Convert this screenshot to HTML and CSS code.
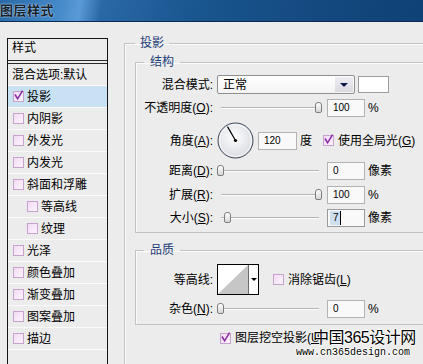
FILE: index.html
```html
<!DOCTYPE html>
<html lang="zh-CN">
<head>
    <meta charset="UTF-8">
    <title>图层样式</title>
    <link rel="stylesheet" href="styles.css">
</head>
<body>

    <div class="titlebar"><span class="title">图层样式</span></div>

    <div class="main">
        <!-- 左侧样式列表 -->
        <div class="styles-list">
            <div class="list-head">样式</div>
            <ul class="list">
                <li class="plain">混合选项:默认</li>
                <li class="active"><span class="cb"><svg width="11" height="11" viewBox="0 0 11 11"><path d="M2 4.5 L4.6 8.8 L9.6 0.6" fill="none" stroke="#8c2ea6" stroke-width="1.6"/></svg></span>投影</li>
                <li><span class="cb"></span>内阴影</li>
                <li><span class="cb"></span>外发光</li>
                <li><span class="cb"></span>内发光</li>
                <li><span class="cb"></span>斜面和浮雕</li>
                <li class="sub"><span class="cb"></span>等高线</li>
                <li class="sub"><span class="cb"></span>纹理</li>
                <li><span class="cb"></span>光泽</li>
                <li><span class="cb"></span>颜色叠加</li>
                <li><span class="cb"></span>渐变叠加</li>
                <li><span class="cb"></span>图案叠加</li>
                <li><span class="cb"></span>描边</li>
                <li class="plain"></li>
            </ul>
        </div>

        <!-- 右侧设置 -->
        <div class="settings">
            <fieldset class="group outer">
                <legend>投影</legend>

                <fieldset class="group inner">
                    <legend>结构</legend>

                    <div class="row row-blend">
                        <span class="lbl">混合模式:</span>
                        <div class="select"><span class="select-text">正常</span><span class="select-arrow"></span></div>
                        <div class="swatch"></div>
                    </div>

                    <div class="row row-opacity">
                        <span class="lbl">不透明度(<u>O</u>):</span>
                        <div class="slider"><span class="track"></span><span class="thumb" style="left: 98px"></span></div>
                        <div class="num">100</div>
                        <span class="unit">%</span>
                    </div>

                    <div class="row row-angle">
                        <span class="lbl">角度(<u>A</u>):</span>
                        <svg class="dial" width="37" height="37" viewBox="0 0 37 37">
                            <defs>
                                <radialGradient id="dialFill" cx="45%" cy="40%" r="60%">
                                    <stop offset="0" stop-color="#ffffff"/>
                                    <stop offset="1" stop-color="#dadce2"/>
                                </radialGradient>
                            </defs>
                            <circle cx="18.5" cy="18.5" r="17.5" fill="url(#dialFill)" stroke="#3b4658"/>
                            <circle cx="18.5" cy="18.5" r="16" fill="none" stroke="#ffffff" opacity="0.8"/>
                            <line x1="18.5" y1="18.5" x2="10.5" y2="4.6" stroke="#000" stroke-width="1.2"/>
                            <circle cx="18.5" cy="18.5" r="1.6" fill="#000"/>
                        </svg>
                        <div class="num num-angle">120</div>
                        <span class="unit">度</span>
                        <span class="cb cb-gap"><svg width="11" height="11" viewBox="0 0 11 11"><path d="M2 4.5 L4.6 8.8 L9.6 0.6" fill="none" stroke="#8c2ea6" stroke-width="1.6"/></svg></span>
                        <span class="cb-text">使用全局光(<u>G</u>)</span>
                    </div>

                    <div class="row row-distance">
                        <span class="lbl">距离(<u>D</u>):</span>
                        <div class="slider"><span class="track"></span><span class="thumb" style="left: 0px"></span></div>
                        <div class="num">0</div>
                        <span class="unit">像素</span>
                    </div>

                    <div class="row row-spread">
                        <span class="lbl">扩展(<u>R</u>):</span>
                        <div class="slider"><span class="track"></span><span class="thumb" style="left: 98px"></span></div>
                        <div class="num">100</div>
                        <span class="unit">%</span>
                    </div>

                    <div class="row row-size">
                        <span class="lbl">大小(<u>S</u>):</span>
                        <div class="slider"><span class="track"></span><span class="thumb" style="left: 7px"></span></div>
                        <div class="num num-active"><span class="sel">7</span></div>
                        <span class="unit">像素</span>
                    </div>
                </fieldset>

                <fieldset class="group quality">
                    <legend>品质</legend>

                    <div class="row row-contour">
                        <span class="lbl">等高线:</span>
                        <div class="contour">
                            <svg class="contour-pic" width="30" height="29" viewBox="0 0 30 29">
                                <polygon points="0,29 30,0 30,29" fill="#c6c6c6"/>
                            </svg>
                            <span class="contour-arrow"></span>
                        </div>
                        <span class="cb cb-aa"></span>
                        <span class="cb-text">消除锯齿(<u>L</u>)</span>
                    </div>

                    <div class="row row-noise">
                        <span class="lbl">杂色(<u>N</u>):</span>
                        <div class="slider"><span class="track"></span><span class="thumb" style="left: 0px"></span></div>
                        <div class="num">0</div>
                        <span class="unit">%</span>
                    </div>
                </fieldset>

                <div class="knockout">
                    <span class="cb"><svg width="11" height="11" viewBox="0 0 11 11"><path d="M2 4.5 L4.6 8.8 L9.6 0.6" fill="none" stroke="#8c2ea6" stroke-width="1.6"/></svg></span>
                    <span class="cb-text">图层挖空投影(<u>U</u>)</span>
                </div>
            </fieldset>
        </div>
    </div>

    <div class="watermark">
        <div class="wm-title">中国365设计网</div>
        <div class="wm-url">www.cn365design.com</div>
    </div>

</body>
</html>
```

FILE: styles.css
```css
body {
    margin: 0;
    width: 423px;
    height: 364px;
    overflow: hidden;
    position: relative;
    background-color: #ececec;
    font-family: "Liberation Sans", "Noto Sans CJK SC", sans-serif;
    font-size: 12px;
    line-height: 14px;
    color: #000;
}

/* 标题栏 */
.titlebar {
    height: 21px;
    border-bottom: 1px solid #0b2b52;
    background: linear-gradient(100deg, #2a6aa8 0%, #4489c8 14%, #5a9ad6 19%, #2a68a6 24%, #1a5690 45%, #13497f 75%, #0f4276 100%);
    display: flex;
    align-items: center;
}
.title {
    font-size: 13px;
    font-weight: bold;
    color: #16222e;
    letter-spacing: 0.5px;
    text-shadow: 0 0 2px #a9d0f2, 0 0 1px #cfe6fa;
}

.main {
    display: flex;
    align-items: flex-start;
    padding-top: 14px;
}

/* 左侧列表 */
.styles-list {
    margin: 2px 0 0 7px;
    width: 99px;
    height: 325px;
    border: 1px solid #141414;
    border-bottom: none;
    flex: none;
    overflow: hidden;
}
.list-head {
    height: 21px;
    line-height: 19px;
    padding-left: 4px;
    border-bottom: 1px solid #2a2a2a;
}
.list {
    list-style: none;
    margin: 2px 0 0 0;
    padding: 0;
    border-top: 1px solid #2a2a2a;
}
.list li {
    height: 22px;
    box-sizing: border-box;
    border-bottom: 1px solid #fafafa;
    padding-left: 5px;
    display: flex;
    align-items: center;
    white-space: nowrap;
}
.list li.plain {
    padding-left: 4px;
}
.list li.sub {
    padding-left: 19px;
}
.list li.active {
    background-color: #c9e2f3;
}
.list li .cb {
    margin-right: 3px;
}

/* 复选框 */
.cb {
    width: 11px;
    height: 11px;
    box-sizing: border-box;
    border: 1px solid #c8a2cf;
    background: linear-gradient(135deg, #f2dcf4, #fcf3fc);
    flex: none;
    display: inline-flex;
    overflow: visible;
}
.cb svg {
    margin: -2px 0 0 -1px;
    overflow: visible;
}
.cb-text {
    margin-left: 4px;
    white-space: nowrap;
}

/* 右侧设置 */
.settings {
    margin-left: 16px;
    width: 299px;
    flex: none;
}
.group {
    margin: 0;
    min-width: 0;
    border: 1px solid #c2c2c2;
    border-right: none;
    box-shadow: inset 1px 1px 0 #fbfbfb;
}
.group legend {
    padding: 0 5px;
    line-height: 14px;
    color: #1d3d78;
}
.outer {
    padding: 5px 0 19px 10px;
    border-bottom: none;
}
.inner {
    padding: 6px 0 5px 0;
}
.inner legend,
.quality legend {
    margin-left: 8px;
    padding: 0 6px;
}
.quality {
    margin-top: 10px;
    padding: 7px 0 6px 0;
}

.row {
    display: flex;
    align-items: center;
    white-space: nowrap;
}
.lbl {
    width: 77px;
    margin-right: 4px;
    text-align: right;
    flex: none;
}
.row-blend { height: 19px; margin-bottom: 5px; }
.row-opacity { height: 18px; margin-bottom: 5px; }
.row-angle { height: 37px; margin-bottom: 3px; }
.row-distance { height: 18px; margin-bottom: 6px; }
.row-spread { height: 18px; margin-bottom: 4px; }
.row-size { height: 19px; }
.row-contour { height: 31px; margin-bottom: 5px; }
.row-noise { height: 18px; }

/* 下拉框 */
.select {
    width: 138px;
    height: 19px;
    box-sizing: border-box;
    border: 1px solid #8f8f8f;
    border-radius: 2px;
    background: linear-gradient(#ffffff, #f4f4f4);
    display: flex;
    align-items: center;
    justify-content: space-between;
    padding: 1px 1px 1px 5px;
}
.select-arrow {
    width: 18px;
    height: 15px;
    background: linear-gradient(#eeeef2, #d9dae0);
    position: relative;
}
.select-arrow::after {
    content: "";
    position: absolute;
    left: 5px;
    top: 6px;
    border-left: 4px solid transparent;
    border-right: 4px solid transparent;
    border-top: 4px solid #101a48;
}
.swatch {
    width: 31px;
    height: 17px;
    margin-left: 3px;
    box-sizing: border-box;
    border: 1px solid #9c9c9c;
    background-color: #fff;
}

/* 滑块 */
.slider {
    width: 106px;
    height: 12px;
    position: relative;
    flex: none;
}
.track {
    position: absolute;
    left: 4px;
    right: 4px;
    top: 5px;
    height: 1px;
    background-color: #b4b4b4;
    border-bottom: 1px solid #fdfdfd;
}
.thumb {
    position: absolute;
    top: 0;
    width: 7px;
    height: 11px;
    box-sizing: border-box;
    border: 1px solid #7d7d7d;
    border-radius: 3px 3px 2px 2px;
    background: linear-gradient(#ffffff, #d6d6d6);
}

/* 数值框 */
.num {
    width: 38px;
    height: 18px;
    margin-left: 4px;
    box-sizing: border-box;
    border: 1px solid #b2b2b2;
    background-color: #f9f9f9;
    font-size: 10px;
    line-height: 16px;
    padding-left: 5px;
    flex: none;
}
.num-angle {
    width: 39px;
    margin-left: 4px;
}
.num-active {
    padding-left: 2px;
    border-color: #9a9a9a;
}
.sel {
    display: inline-block;
    height: 14px;
    line-height: 14px;
    margin-top: 1px;
    padding: 0 1px 0 3px;
    background-color: #cde0f2;
    border-right: 1px solid #000;
}
.unit {
    margin-left: 3px;
}
.dial {
    flex: none;
}
.cb-gap {
    margin-left: 11px;
}

/* 等高线 */
.contour {
    width: 42px;
    height: 31px;
    box-sizing: border-box;
    border: 1px solid #000;
    background-color: #fff;
    display: flex;
    flex: none;
}
.contour-pic {
    display: block;
    border-right: 1px solid #6a6a6a;
}
.contour-arrow {
    flex: 1;
    position: relative;
}
.contour-arrow::after {
    content: "";
    position: absolute;
    left: 2px;
    top: 13px;
    border-left: 3px solid transparent;
    border-right: 3px solid transparent;
    border-top: 3px solid #000;
}
.cb-aa {
    margin-left: 14px;
}

.knockout {
    display: flex;
    align-items: center;
    height: 14px;
    margin: 6px 0 0 85px;
}

/* 水印 */
.watermark {
    position: absolute;
    left: 296px;
    top: 328px;
    color: #000;
    text-shadow: 1px 0 #fff, -1px 0 #fff, 0 1px #fff, 0 -1px #fff;
}
.wm-title {
    margin-left: 17px;
    font-size: 16px;
    line-height: 19px;
    letter-spacing: -0.5px;
}
.wm-url {
    font-family: "Liberation Mono", monospace;
    font-size: 10px;
    line-height: 11px;
}
```
